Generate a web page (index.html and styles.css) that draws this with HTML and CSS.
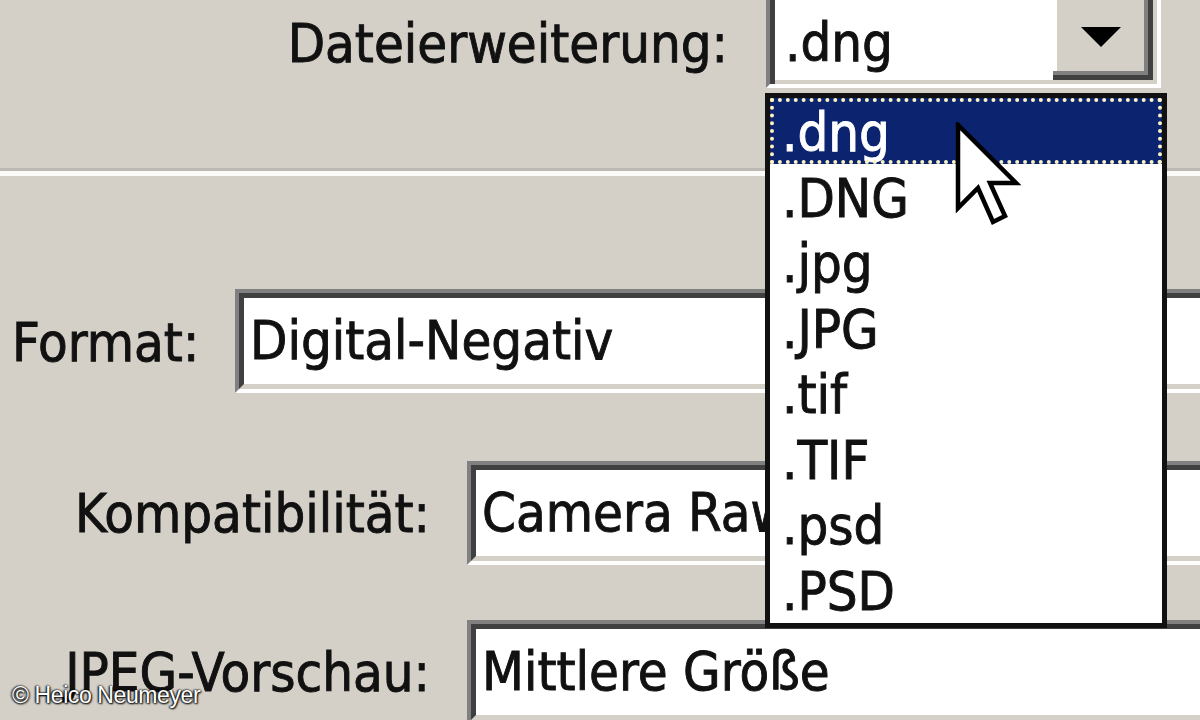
FILE: index.html
```html
<!DOCTYPE html>
<html lang="de">
<head>
    <meta charset="UTF-8">
    <title>DNG-Konverter – Dateierweiterung</title>
    <link rel="stylesheet" href="styles.css">
</head>
<body>
    <div class="dialog">
        <div class="ext-row">
            <label class="ext-label">Dateierweiterung:</label>
            <div class="combo">
                <span class="combo-value">.dng</span>
                <span class="combo-btn"><span class="combo-arrow"></span></span>
            </div>
        </div>

        <div class="sep"></div>

        <div class="format-row">
            <label class="format-label">Format:</label>
            <div class="field"><div class="field-in">Digital-Negativ</div></div>
        </div>

        <div class="opts">
            <div class="opt-row">
                <label class="opt-label">Kompatibilität:</label>
                <div class="field"><div class="field-in">Camera Raw 2.4 und höher</div></div>
            </div>
            <div class="opt-row">
                <label class="opt-label">JPEG-Vorschau:</label>
                <div class="field"><div class="field-in">Mittlere Größe</div></div>
            </div>
        </div>

        <!-- open list of the combo -->
        <ul class="dropdown">
            <li class="item selected">.dng</li>
            <li class="item">.DNG</li>
            <li class="item">.jpg</li>
            <li class="item">.JPG</li>
            <li class="item">.tif</li>
            <li class="item">.TIF</li>
            <li class="item">.psd</li>
            <li class="item">.PSD</li>
        </ul>

        <svg class="pointer" width="70" height="110" viewBox="0 0 70 110">
            <path d="M3 3 L3 86 L23 66 L38 100 L50 94 L35 61 L61 61 Z" fill="#fff" stroke="#000" stroke-width="4.5" stroke-linejoin="miter"/>
        </svg>

        <div class="credit">© Heico Neumeyer</div>
    </div>
</body>
</html>
```

FILE: styles.css
```css
* {
    margin: 0;
    padding: 0;
    box-sizing: border-box;
}

body {
    width: 1200px;
    height: 720px;
    overflow: hidden;
    background: #d4d0c8;
    font-family: "DejaVu Sans Condensed", "DejaVu Sans", sans-serif;
    font-stretch: condensed;
    font-size: 54px;
    color: #111;
    -webkit-text-stroke: 0.9px #111;
}

.dialog {
    position: relative;
    width: 1240px;
    height: 720px;
}

/* top row */
.ext-row {
    display: flex;
    height: 88px;
}

.ext-label {
    width: 728px;
    margin-right: 38px;
    text-align: right;
    line-height: 88px;
}

.combo {
    width: 395px;
    height: 88px;
    display: flex;
    background: #fff;
    border-left: 4px solid #808080;
    border-right: 4px solid #fff;
    border-bottom: 4px solid #fff;
    box-shadow: inset 5px 0 0 #404040, inset -4px -4px 0 #d4d0c8;
    padding: 0 4px 4px 5px;
}

.combo-value {
    flex: 1;
    padding-left: 10px;
    line-height: 86px;
}

.combo-btn {
    width: 100px;
    height: 80px;
    display: flex;
    align-items: center;
    justify-content: center;
    background: #d4d0c8;
    border-right: 5px solid #404040;
    border-bottom: 5px solid #404040;
    box-shadow: inset -4px -4px 0 #808080, inset 4px 0 0 #fff;
}

.combo-arrow {
    width: 0;
    height: 0;
    border-left: 20px solid transparent;
    border-right: 20px solid transparent;
    border-top: 20px solid #000;
    margin-top: -2px;
}

.sep {
    margin-top: 80px;
    height: 8px;
    border-top: 3px solid #bcb8b2;
    background: #fbfbfa;
}

/* sunken text fields */
.field {
    flex: 1;
    height: 104px;
    border: 4px solid;
    border-color: #808080 #fff #fff #808080;
}

.field-in {
    height: 100%;
    background: #fff;
    border: 5px solid;
    border-color: #404040 #d4d0c8 #d4d0c8 #404040;
    padding-left: 6px;
    line-height: 86px;
    white-space: nowrap;
    overflow: hidden;
}

.format-row {
    display: flex;
    height: 104px;
    margin-top: 113px;
    padding-left: 12px;
}

.format-label {
    width: 223px;
    height: 104px;
    padding-top: 4px;
    line-height: 100px;
}

.opts {
    margin-top: 68px;
    display: flex;
    flex-direction: column;
    gap: 55px;
}

.opt-row {
    display: flex;
    height: 104px;
}

.opt-label {
    width: 430px;
    height: 104px;
    margin-right: 37px;
    padding-top: 4px;
    text-align: right;
    line-height: 98px;
}

/* open list */
.dropdown {
    position: absolute;
    left: 765px;
    top: 93px;
    width: 402px;
    height: 535px;
    list-style: none;
    background: #fff;
    border: 5px solid #111;
    z-index: 2;
}

.item {
    height: 65.5px;
    line-height: 70px;
    padding-left: 12px;
}

.item.selected {
    background: #0c2470;
    color: #fff;
    -webkit-text-stroke: 0.9px #fff;
    outline: 4px dotted #fbf3c4;
    outline-offset: -4px;
}

.pointer {
    position: absolute;
    left: 955px;
    top: 122px;
    z-index: 3;
}

.credit {
    position: absolute;
    left: 12px;
    bottom: 11px;
    font-family: "Liberation Sans", Arial, sans-serif;
    font-stretch: normal;
    font-size: 23px;
    letter-spacing: -0.4px;
    color: #fff;
    -webkit-text-stroke: 0;
    text-shadow: 0 0 2px #000, 1px 1px 2px #000, -1px 0 2px #000;
    z-index: 4;
}
```
